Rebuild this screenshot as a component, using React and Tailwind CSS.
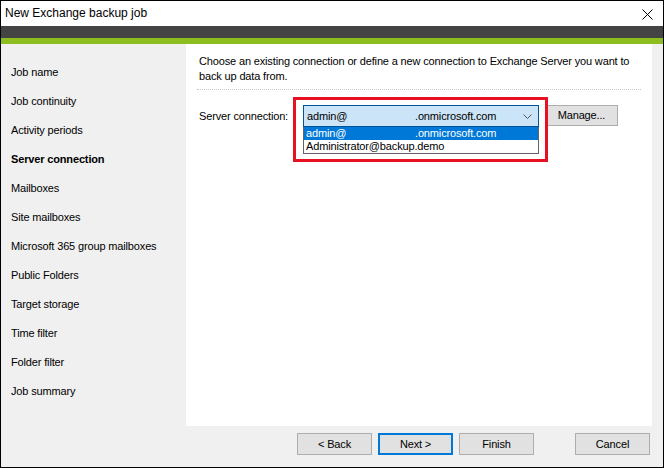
import React from "react";

const items = [
  "Job name",
  "Job continuity",
  "Activity periods",
  "Server connection",
  "Mailboxes",
  "Site mailboxes",
  "Microsoft 365 group mailboxes",
  "Public Folders",
  "Target storage",
  "Time filter",
  "Folder filter",
  "Job summary",
];

function Btn({ children, primary }) {
  return (
    <div
      className={
        "w-[75px] h-[22px] flex items-center justify-center bg-[#e1e1e1] " +
        (primary ? "border-2 border-[#0078d7]" : "border border-[#adadad]")
      }
    >
      {children}
    </div>
  );
}

export default function App() {
  return (
    <div className="w-[664px] h-[468px] border border-black bg-[#f0f0f0] flex flex-col overflow-hidden font-['Liberation_Sans',sans-serif] text-[11px] tracking-[-0.15px] text-black leading-[15px]">
      <div className="h-[25px] bg-white flex items-center justify-between pl-[4px] pr-[10px] shrink-0">
        <span className="text-[12px] tracking-normal">New Exchange backup job</span>
        <svg width="11" height="11" viewBox="0 0 11 11" className="mt-[1px]">
          <path d="M0.5 0.5L10.5 10.5M10.5 0.5L0.5 10.5" stroke="#000" strokeWidth="1" />
        </svg>
      </div>
      <div className="h-[12px] bg-[#444444] shrink-0" />
      <div className="h-[6px] bg-[#8dbd1e] shrink-0" />
      <div className="flex flex-1 min-h-0">
        <div className="w-[185px] shrink-0 pt-[14px] flex flex-col">
          {items.map((t) => (
            <div
              key={t}
              className={
                "h-[29px] flex items-center pl-[10px] " +
                (t === "Server connection" ? "font-bold" : "")
              }
            >
              {t}
            </div>
          ))}
        </div>
        <div className="flex-1 flex flex-col pr-[11px]">
          <div className="h-[382px] bg-white relative pl-[13px] pr-[8px] pt-[10px]">
            <p className="whitespace-nowrap">
              Choose an existing connection or define a new connection to Exchange Server you want to
              <br />
              back up data from.
            </p>
            <div className="mt-[5px] mr-[3px] -ml-[2px] border-t border-dotted border-[#c8c8c8]" />
            <div className="mt-[15px] flex items-start">
              <div className="w-[104px] h-[22px] flex items-center">Server connection:</div>
              <div className="w-[236px] flex flex-col">
                <div className="h-[22px] border border-[#005499] bg-[#cce4f7] flex items-center pl-[3px] pr-[6px]">
                  <span className="w-[108px]">admin@</span>
                  <span className="flex-1">.onmicrosoft.com</span>
                  <svg width="9" height="5" viewBox="0 0 9 5">
                    <path d="M0.5 0.5L4.5 4.5L8.5 0.5" fill="none" stroke="#555" strokeWidth="1" />
                  </svg>
                </div>
                <div className="border border-t-0 border-[#646464] bg-white">
                  <div className="h-[13px] bg-[#0078d7] text-white flex items-center pl-[2px]">
                    <span className="w-[109px]">admin@</span>
                    <span>.onmicrosoft.com</span>
                  </div>
                  <div className="h-[13px] flex items-center pl-[2px]">Administrator@backup.demo</div>
                </div>
              </div>
              <div className="ml-[6px] w-[73px] h-[21px] flex items-center justify-center bg-[#e1e1e1] border border-[#adadad]">
                Manage...
              </div>
            </div>
            <div className="absolute left-[107px] top-[53px] w-[255px] h-[65px] border-[3px] border-[#e81123]" />
          </div>
          <div className="flex pt-[7px] pl-[111px]">
            <div className="flex gap-[6px]">
              <Btn>&lt; Back</Btn>
              <Btn primary>Next &gt;</Btn>
              <Btn>Finish</Btn>
            </div>
            <div className="ml-[41px]">
              <Btn>Cancel</Btn>
            </div>
          </div>
        </div>
      </div>
    </div>
  );
}
